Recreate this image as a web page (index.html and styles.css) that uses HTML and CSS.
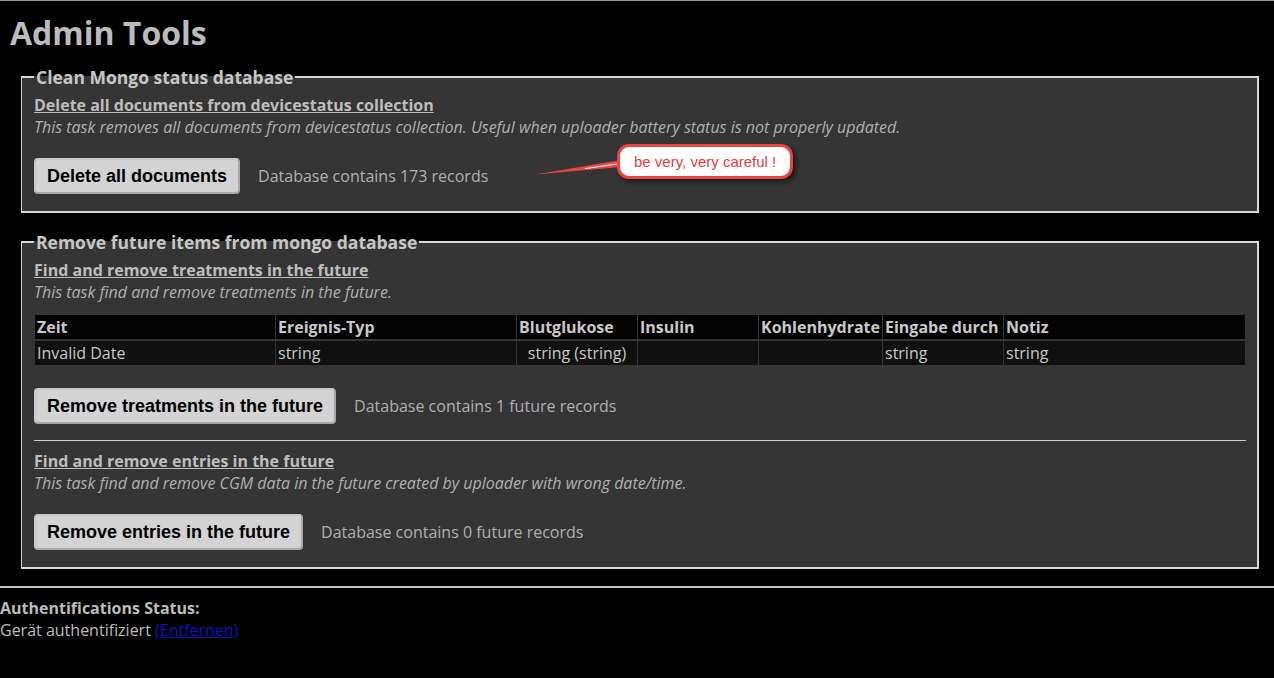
FILE: index.html
```html
<!DOCTYPE html>
<html lang="de">
<head>
<meta charset="utf-8">
<title>Admin Tools</title>
<link rel="stylesheet" href="styles.css">
</head>
<body>
<div class="top-rule"></div>
<main class="admin">
  <h1 class="page-title">Admin Tools</h1>

  <fieldset class="panel">
    <legend class="panel-legend">Clean Mongo status database</legend>
    <section class="task">
      <a class="task-title" href="#">Delete all documents from devicestatus collection</a>
      <p class="task-desc">This task removes all documents from devicestatus collection. Useful when uploader battery status is not properly updated.</p>
      <div class="task-actions">
        <button class="btn" type="button">Delete all documents</button>
        <span class="task-status">Database contains 173 records</span>
        <div class="callout">
          <svg class="callout-tail" width="86" height="20" viewBox="0 0 86 20">
            <polygon points="0,15.5 86,1 86,8" fill="#e84444"/>
            <polyline points="50,9.6 86,4.4" stroke="#fff" stroke-width="1" fill="none"/>
          </svg>
          <div class="callout-bubble">be very, very careful !</div>
        </div>
      </div>
    </section>
  </fieldset>

  <fieldset class="panel">
    <legend class="panel-legend">Remove future items from mongo database</legend>
    <section class="task">
      <a class="task-title" href="#">Find and remove treatments in the future</a>
      <p class="task-desc">This task find and remove treatments in the future.</p>
      <table class="records">
        <thead>
          <tr>
            <th class="c-time">Zeit</th>
            <th class="c-type">Ereignis-Typ</th>
            <th class="c-bg">Blutglukose</th>
            <th class="c-ins">Insulin</th>
            <th class="c-carb">Kohlenhydrate</th>
            <th class="c-by">Eingabe durch</th>
            <th class="c-note">Notiz</th>
          </tr>
        </thead>
        <tbody>
          <tr>
            <td>Invalid Date</td>
            <td>string</td>
            <td class="center">string (string)</td>
            <td></td>
            <td></td>
            <td>string</td>
            <td>string</td>
          </tr>
        </tbody>
      </table>
      <div class="task-actions">
        <button class="btn" type="button">Remove treatments in the future</button>
        <span class="task-status">Database contains 1 future records</span>
      </div>
    </section>
    <hr class="task-rule">
    <section class="task">
      <a class="task-title" href="#">Find and remove entries in the future</a>
      <p class="task-desc">This task find and remove CGM data in the future created by uploader with wrong date/time.</p>
      <div class="task-actions">
        <button class="btn" type="button">Remove entries in the future</button>
        <span class="task-status">Database contains 0 future records</span>
      </div>
    </section>
  </fieldset>
</main>
<hr class="page-rule">
<footer class="auth">
  <div class="auth-title">Authentifications Status:</div>
  <div class="auth-line">Gerät authentifiziert <a class="auth-link" href="#">(Entfernen)</a></div>
</footer>
</body>
</html>
```

FILE: styles.css
```css
html, body {
  margin: 0;
  padding: 0;
  background: #000;
}
body {
  font-family: "Open Sans", "Liberation Sans", sans-serif;
  color: #bbb;
  font-size: 16px;
}
.top-rule {
  height: 1px;
  background: #9a9a9a;
}
.admin {
  padding: 0 15px 0 10px;
}
.page-title {
  margin: 12px 0 14px;
  font-size: 32px;
  line-height: 40px;
  font-weight: 700;
  color: #bbb;
}
.panel {
  margin: 0 0 19px 11px;
  padding: 0 11px 17px 12px;
  border: 1px solid #d8d8d8;
  border-width: 2px 2px 2px 1px;
  background: #353535;
}
.panel:last-child {
  margin-bottom: 17px;
}
.panel-legend {
  padding: 0 2px;
  margin-left: 0;
  font-size: 17.5px;
  line-height: 20px;
  font-weight: 700;
  color: #c6c6c6;
}
.task {
  display: flex;
  flex-direction: column;
  align-items: flex-start;
}
.task-title {
  margin-top: 7px;
  font-size: 16px;
  line-height: 20px;
  font-weight: 700;
  color: #bdbdbd;
  text-decoration: underline;
}
.panel-legend + .task .task-title {
  margin-top: 8px;
}
.task-desc {
  margin: 1px 0 0;
  font-size: 16px;
  line-height: 22px;
  font-style: italic;
  color: #b0b0b0;
}
.task-actions {
  position: relative;
  margin-top: 20px;
  display: flex;
  align-items: center;
  gap: 18px;
}
.records + .task-actions {
  margin-top: 21px;
}
.btn {
  height: 36px;
  padding: 0 11px;
  font-family: "Liberation Sans", Arial, sans-serif;
  font-size: 18px;
  font-weight: 700;
  color: #000;
  background: #d3d3d3;
  border: 2px solid #a8a8a8;
  border-top-color: #c8c8c8;
  border-left-color: #c8c8c8;
  border-radius: 4px;
}
.task-status {
  font-size: 16px;
  color: #b0b0b0;
}
.callout {
  position: absolute;
  left: 501px;
  top: -14px;
  display: flex;
  align-items: flex-start;
}
.callout-tail {
  margin-top: 15px;
  margin-right: -4px;
}
.callout-bubble {
  padding: 6px 14px;
  border: 3px solid #e84444;
  border-radius: 12px;
  background: #fff;
  box-shadow: 3px 3px 4px rgba(0, 0, 0, 0.5);
  font-family: "Liberation Sans", Arial, sans-serif;
  font-size: 15px;
  line-height: 17px;
  color: #e23c3c;
  white-space: nowrap;
}
.records {
  margin-top: 10px;
  width: 100%;
  border-collapse: separate;
  border-spacing: 1px 2px;
}
.records th, .records td {
  padding: 0 2px;
  height: 24px;
  text-align: left;
  font-size: 16px;
  color: #c8c8c8;
}
.records th {
  background: #030303;
  font-weight: 700;
}
.records td {
  background: #101010;
}
.records td.center {
  text-align: center;
}
.c-time, .c-type { width: 236px; }
.c-bg, .c-ins, .c-by { width: 116px; }
.c-carb { width: 119px; }
.task-rule {
  margin: 16px 0 3px;
  border: 0;
  border-top: 1px solid #cfcfcf;
}
.page-rule {
  margin: 0;
  border: 0;
  border-top: 2px solid #c8c8c8;
}
.auth {
  padding-top: 9px;
  font-size: 16px;
  line-height: 22px;
}
.auth-title {
  font-weight: 700;
}
.auth-link {
  color: #1212c4;
}
```
